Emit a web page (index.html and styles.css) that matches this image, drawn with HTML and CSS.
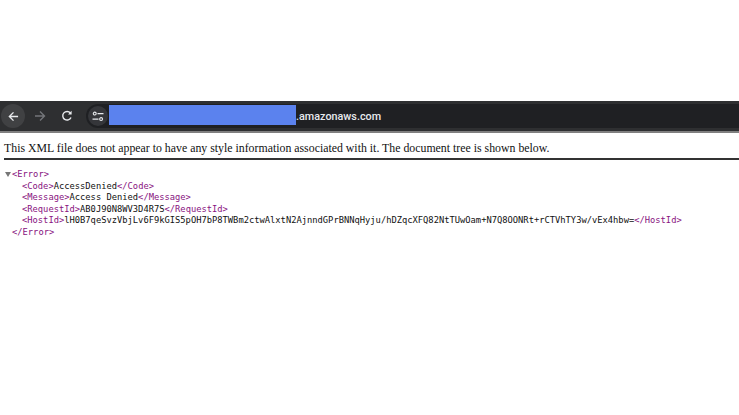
FILE: index.html
```html
<!DOCTYPE html>
<html lang="en">
<head>
<meta charset="utf-8">
<title>Access Denied</title>
<link rel="stylesheet" href="styles.css">
</head>
<body>
<div class="toolbar">
  <div class="back">
    <svg width="11" height="11" viewBox="0 0 12 12"><path d="M11 6H1.5M6 1.5 1.5 6 6 10.5" fill="none" stroke="#e8eaed" stroke-width="1.5"/></svg>
  </div>
  <svg class="forward" width="12" height="12" viewBox="0 0 12 12"><path d="M1 6h9.5M6 1.5 10.5 6 6 10.5" fill="none" stroke="#74767a" stroke-width="1.4"/></svg>
  <svg class="reload" width="12" height="12" viewBox="0 0 12 12"><path d="M10 7.5A4.3 4.3 0 1 1 9.4 3" fill="none" stroke="#e8eaed" stroke-width="1.4"/><path d="M10.6 .8v3.6H7z" fill="#e8eaed"/></svg>
  <div class="omnibox">
    <div class="tune">
      <svg width="12" height="11" viewBox="0 0 14 12"><g fill="none" stroke="#e8eaed" stroke-width="1.3"><circle cx="3.2" cy="2.6" r="1.7"/><path d="M6.4 2.6h7M.6 9h7"/><circle cx="10.6" cy="9" r="1.7"/></g></svg>
    </div>
    <div class="redaction"></div>
    <span class="domain">.amazonaws.com</span>
  </div>
</div>
<div class="notice">
  <p class="notice-text">This XML file does not appear to have any style information associated with it. The document tree is shown below.</p>
</div>
<div class="tree">
  <div class="line root"><span class="arrow"></span><span class="tag">&lt;Error&gt;</span></div>
  <div class="line child"><span class="tag">&lt;Code&gt;</span>AccessDenied<span class="tag">&lt;/Code&gt;</span></div>
  <div class="line child"><span class="tag">&lt;Message&gt;</span>Access Denied<span class="tag">&lt;/Message&gt;</span></div>
  <div class="line child"><span class="tag">&lt;RequestId&gt;</span>AB0J90N8WV3D4R7S<span class="tag">&lt;/RequestId&gt;</span></div>
  <div class="line child"><span class="tag">&lt;HostId&gt;</span>lH0B7qeSvzVbjLv6F9kGIS5pOH7bP8TWBm2ctwAlxtN2AjnndGPrBNNqHyju/hDZqcXFQ82NtTUwOam+N7Q8OONRt+rCTVhTY3w/vEx4hbw=<span class="tag">&lt;/HostId&gt;</span></div>
  <div class="line close"><span class="tag">&lt;/Error&gt;</span></div>
</div>
</body>
</html>
```
FILE: styles.css
```css
html, body {
  margin: 0;
  padding: 0;
  background: #fff;
}
body {
  padding-top: 101px;
  overflow: hidden;
}
.toolbar {
  height: 30px;
  background: #2e2f31;
  border-bottom: 2px solid #808080;
  display: flex;
  align-items: center;
  padding-left: 1px;
}
.back {
  width: 24px;
  height: 24px;
  border-radius: 50%;
  background: #404143;
  display: flex;
  align-items: center;
  justify-content: center;
}
.forward {
  margin-left: 9px;
}
.reload {
  margin-left: 15px;
}
.omnibox {
  margin-left: 13px;
  height: 24px;
  flex: 1;
  display: flex;
  align-items: center;
  background: #1f2023;
  border-radius: 12px 0 0 12px;
  padding-left: 2px;
}
.tune {
  width: 20px;
  height: 20px;
  border-radius: 50%;
  background: #35363a;
  display: flex;
  align-items: center;
  justify-content: center;
}
.redaction {
  width: 187px;
  height: 20px;
  margin-left: 1px;
  margin-bottom: 2px;
  background: #5b82ee;
}
.domain {
  font: 500 10.8px "Roboto", "Noto Sans", sans-serif;
  color: #e8eaed;
}
.notice {
  padding: 7px 0 0 4px;
}
.notice-text {
  margin: 0;
  font: 11.83px/16px "Liberation Serif", serif;
  color: #111;
  height: 18px;
  border-bottom: 2px solid #333;
}
.tree {
  padding-top: 9px;
  font: 8.78px/11.5px "DejaVu Sans Mono", monospace;
  color: #111;
}
.line {
  white-space: pre;
}
.root {
  padding-left: 5px;
  display: flex;
  align-items: center;
}
.arrow {
  width: 0;
  height: 0;
  border: 3px solid transparent;
  border-top: 5px solid #777;
  border-bottom: 0;
  margin-right: 1px;
}
.child {
  padding-left: 22px;
}
.close {
  padding-left: 12px;
}
.tag {
  color: #881280;
}
```
